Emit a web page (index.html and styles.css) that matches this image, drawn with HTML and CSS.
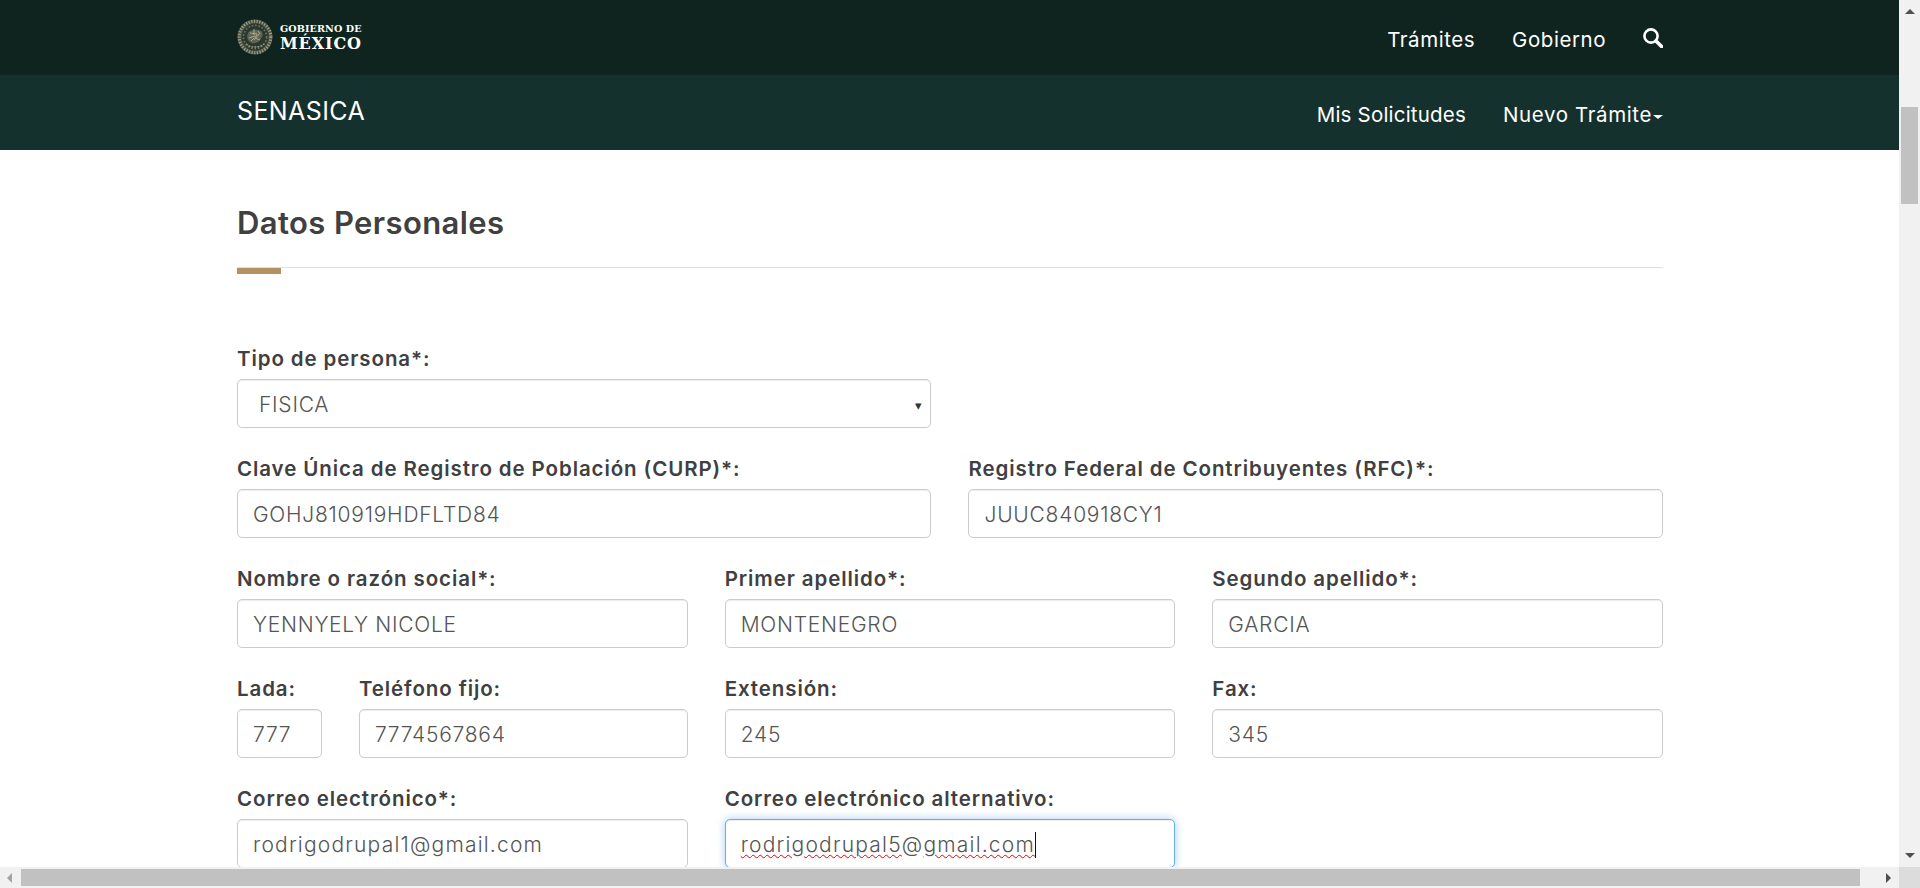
FILE: index.html
```html
<!DOCTYPE html>
<html lang="es">
<head>
<meta charset="utf-8">
<title>Datos Personales</title>
<link rel="stylesheet" href="styles.css">
</head>
<body>
<div class="window">
  <div class="viewport">
    <div class="page">
      <header class="topbar">
        <div class="wrap bar-row">
          <a class="brand">
            <svg class="seal" width="36" height="36" viewBox="0 0 36 36" aria-hidden="true">
              <circle cx="18" cy="18" r="17.6" fill="#4a5245"/>
              <circle cx="18" cy="18" r="15.8" fill="none" stroke="#a09e84" stroke-width="3" stroke-dasharray="1.2 1.5"/>
              <circle cx="18" cy="18" r="13.4" fill="#2b3830"/>
              <circle cx="18" cy="18" r="11.6" fill="none" stroke="#6f7562" stroke-width="1.6" stroke-dasharray="1.6 1.8"/>
              <path d="M11 14c3-4 9-4 13-2 2 2 2 6 0 7-1 4-6 6-9 5-4-1-6-6-4-10z" fill="#5f6555"/>
              <path d="M13 14l7 1-2 4 5 2M12 19l6-2M17 10v6M23 14l-6 7M14 22l3-3M21 12l2 3" fill="none" stroke="#aaa88e" stroke-width="1"/>
              <path d="M9 25c5 4 13 4 18 0" fill="none" stroke="#9a9a80" stroke-width="1.3" stroke-dasharray="2 1"/>
            </svg>
            <span class="brand-text">
              <span class="brand-small">GOBIERNO DE</span>
              <span class="brand-big">MÉXICO</span>
            </span>
          </a>
          <nav class="topnav">
            <a>Trámites</a>
            <a>Gobierno</a>
            <svg class="search" width="20" height="20" viewBox="0 0 20 20" aria-hidden="true">
              <circle cx="8" cy="8" r="6.6" fill="none" stroke="#fff" stroke-width="2.6"/>
              <path d="M13 13L18.6 18.6" stroke="#fff" stroke-width="3.6" stroke-linecap="round"/>
            </svg>
          </nav>
        </div>
      </header>
      <div class="subbar">
        <div class="wrap bar-row">
          <span class="site-name">SENASICA</span>
          <nav class="subnav">
            <a>Mis Solicitudes</a>
            <a class="has-caret">Nuevo Trámite<span class="caret"></span></a>
          </nav>
        </div>
      </div>
      <main class="wrap content">
        <h1 class="title">Datos Personales</h1>
        <div class="rule"><span class="rule-accent"></span></div>
        <form class="form-grid">
          <div class="field s6">
            <label>Tipo de persona*:</label>
            <div class="control select"><span>FISICA</span><span class="select-arrow">▾</span></div>
          </div>
          <div class="field s6"></div>
          <div class="field s6">
            <label>Clave Única de Registro de Población (CURP)*:</label>
            <div class="control">GOHJ810919HDFLTD84</div>
          </div>
          <div class="field s6">
            <label>Registro Federal de Contribuyentes (RFC)*:</label>
            <div class="control">JUUC840918CY1</div>
          </div>
          <div class="field s4">
            <label>Nombre o razón social*:</label>
            <div class="control">YENNYELY NICOLE</div>
          </div>
          <div class="field s4">
            <label>Primer apellido*:</label>
            <div class="control">MONTENEGRO</div>
          </div>
          <div class="field s4">
            <label>Segundo apellido*:</label>
            <div class="control">GARCIA</div>
          </div>
          <div class="field s1">
            <label>Lada:</label>
            <div class="control">777</div>
          </div>
          <div class="field s3">
            <label>Teléfono fijo:</label>
            <div class="control">7774567864</div>
          </div>
          <div class="field s4">
            <label>Extensión:</label>
            <div class="control">245</div>
          </div>
          <div class="field s4">
            <label>Fax:</label>
            <div class="control">345</div>
          </div>
          <div class="field s4">
            <label>Correo electrónico*:</label>
            <div class="control email">rodrigodrupal1@gmail.com</div>
          </div>
          <div class="field s4">
            <label>Correo electrónico alternativo:</label>
            <div class="control email focused"><span class="typed"><span class="misspelt">rodrigodrupal5</span>@<span class="misspelt">gmail.com</span></span><span class="cursor"></span></div>
          </div>
        </form>
      </main>
    </div>
    <div class="vscroll">
      <span class="arrow up"></span>
      <span class="vthumb"></span>
      <span class="arrow down"></span>
    </div>
  </div>
  <div class="hrow">
    <div class="hscroll">
      <span class="arrow left"></span>
      <span class="hthumb"></span>
      <span class="arrow right"></span>
    </div>
    <div class="corner"></div>
  </div>
</div>
</body>
</html>
```
FILE: styles.css
```css
* { box-sizing: border-box; }
html, body { margin: 0; height: 100%; overflow: hidden; }
body { font-family: "Inter", "Liberation Sans", sans-serif; color: #404041; background: #fff; }

.window { height: 888px; display: flex; flex-direction: column; }
.viewport { flex: 1; min-height: 0; display: flex; }
.page { flex: 1; min-width: 0; overflow: hidden; }
.wrap { width: 1426px; margin-left: 237px; }

/* header */
.topbar { height: 75px; background: #0f241e; }
.subbar { height: 75px; background: #15312d; }
.bar-row { height: 100%; display: flex; align-items: flex-start; justify-content: space-between; color: #fff; }

.brand { display: flex; align-items: center; gap: 7px; margin-top: 19px; }
.seal { display: block; }
.brand-text { display: flex; flex-direction: column; margin-top: 1px; font-family: "DejaVu Serif", "Liberation Serif", serif; font-weight: 700; color: #fff; }
.brand-small { font-size: 9.6px; line-height: 12px; letter-spacing: 0.1px; }
.brand-big { font-size: 16px; line-height: 17px; letter-spacing: 0.9px; }

.topnav { display: flex; align-items: center; margin-top: 28px; font-size: 20.5px; line-height: 24px; letter-spacing: 0.55px; }
.topnav a + a { margin-left: 37px; }
.search { margin-left: 37px; margin-top: -4px; }

.site-name { margin-top: 20px; font-size: 25px; line-height: 32px; font-weight: 400; letter-spacing: 0.4px; }
.subnav { display: flex; margin-top: 28px; font-size: 20.5px; line-height: 24px; letter-spacing: 0.2px; }
.subnav a + a { margin-left: 37px; }
.has-caret { display: flex; align-items: center; letter-spacing: 0.62px; }
.caret { width: 0; height: 0; margin-left: 1px; margin-top: 3px; border-style: solid; border-width: 4px 5px 0; border-color: #fff transparent transparent; }

/* content */
.content { padding-top: 54px; }
.title { margin: 0; font-size: 31px; line-height: 38px; font-weight: 600; color: #404041; letter-spacing: 0.4px; }
.rule { margin-top: 25px; height: 1px; background: #dfdfdf; }
.rule-accent { display: block; width: 44px; height: 6px; position: relative; top: 1px; background: #b29360; }

.form-grid { margin-top: 79px; display: grid; grid-template-columns: repeat(12, 1fr); column-gap: 37px; row-gap: 20px; }
.field { min-height: 90px; }
.s1 { grid-column: span 1; }
.s3 { grid-column: span 3; }
.s4 { grid-column: span 4; }
.s6 { grid-column: span 6; }

label { display: block; height: 24px; margin-bottom: 8px; font-size: 20.5px; line-height: 24px; font-weight: 600; letter-spacing: 0.9px; color: #404041; white-space: nowrap; }

.control { height: 49px; padding: 2px 15px 0; display: flex; align-items: center; border: 1px solid #cccccc; border-radius: 5px; background: #fff; font-size: 21px; letter-spacing: 0.75px; font-weight: 300; color: #555; white-space: nowrap; box-shadow: inset 0 1px 1px rgba(0,0,0,.075); }
.email { letter-spacing: 1.2px; }
.select { justify-content: space-between; padding: 2px 8px 0 21px; }
.select-arrow { font-size: 13px; color: #333; }
.focused { border-color: #66afe9; box-shadow: inset 0 1px 1px rgba(0,0,0,.075), 0 0 8px rgba(102,175,233,.6); }
.typed { display: inline-block; }
.misspelt { text-decoration: underline wavy #f00000 1px; text-underline-offset: 2px; }
.cursor { display: inline-block; width: 1px; height: 26px; background: #111; }

/* scrollbars */
.vscroll { width: 21px; flex: none; background: #f1f1f1; position: relative; display: flex; flex-direction: column; align-items: center; }
.vthumb { position: absolute; top: 107px; left: 2px; width: 17px; height: 97px; background: #c1c1c1; }
.hrow { height: 21px; flex: none; display: flex; }
.hscroll { flex: 1; background: #f1f1f1; display: flex; align-items: center; }
.hthumb { margin-left: 9px; width: 1839px; height: 17px; background: #c1c1c1; }
.corner { width: 21px; background: #dcdcdc; }
.arrow { display: block; width: 0; height: 0; border: 5px solid transparent; }
.arrow.up { margin-top: 9px; border-top: 0; border-bottom-color: #505050; }
.arrow.down { margin-top: auto; margin-bottom: 9px; border-bottom: 0; border-top-color: #505050; }
.arrow.left { margin-left: 7px; border-left: 0; border-right-color: #a3a3a3; }
.arrow.right { margin-left: 26px; border-right: 0; border-left-color: #505050; }
```
